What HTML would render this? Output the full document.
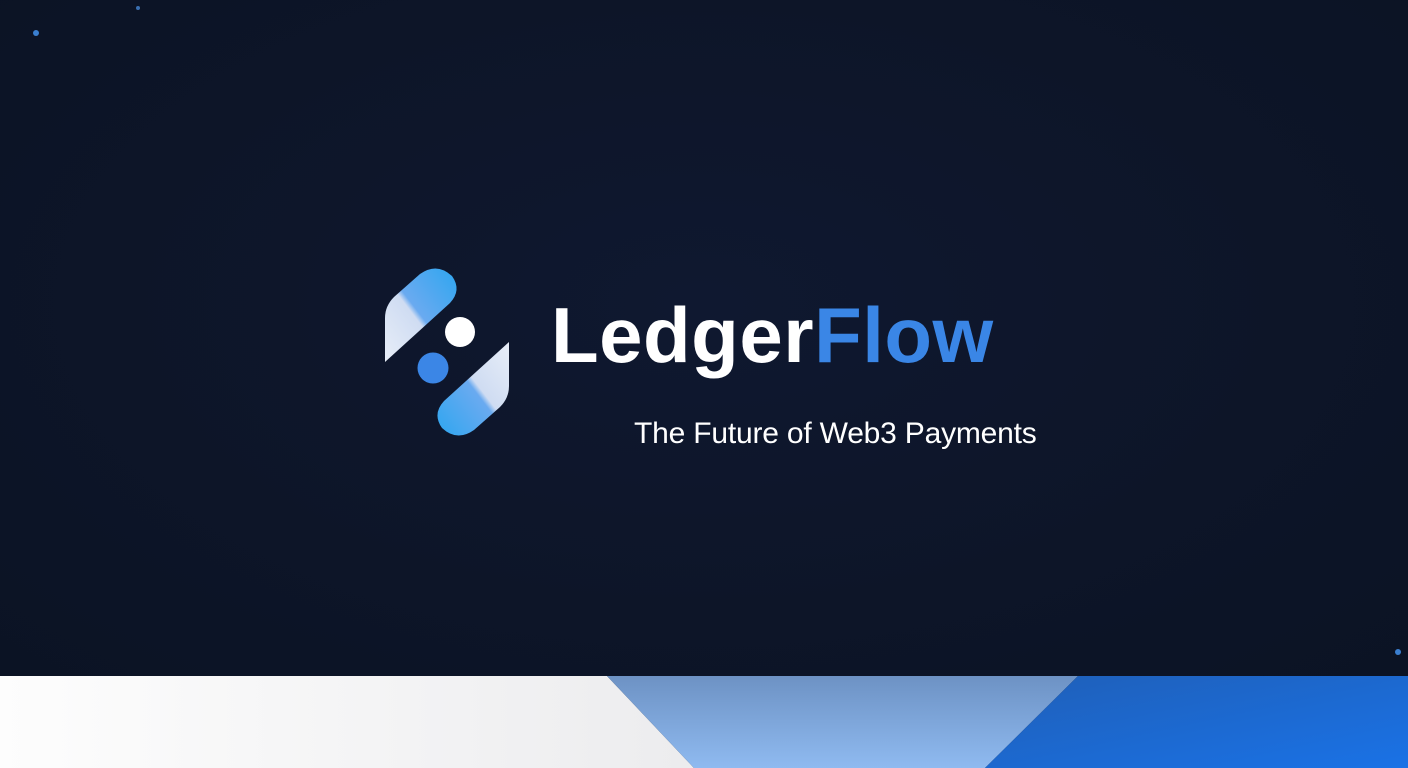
<!DOCTYPE html>
<html><head><style>
html,body{margin:0;padding:0}
body{width:1408px;height:768px;overflow:hidden;position:relative;background:#0e1629;font-family:"Liberation Sans",sans-serif}
.bg{position:absolute;left:0;top:0;width:1408px;height:676px;background:radial-gradient(ellipse at 50% 45%,#0f1830 0%,#0d1528 60%,#0b1324 100%)}
.t1{position:absolute;left:551px;top:296px;font-size:78px;font-weight:bold;color:#fff;letter-spacing:0.5px;line-height:1}
.t1 span{color:#3a86e6}
.t2{position:absolute;left:634px;top:419px;font-size:30px;color:#fff;line-height:1;letter-spacing:-0.2px}
</style></head><body>
<div class="bg"></div>
<svg width="1408" height="768" style="position:absolute;left:0;top:0">
<defs>
<linearGradient id="g1" x1="0" y1="1" x2="1" y2="0"><stop offset="0" stop-color="#e8eef8"/><stop offset="0.45" stop-color="#cfdcf2"/><stop offset="0.5" stop-color="#6aaaf0"/><stop offset="1" stop-color="#2ea6f0"/></linearGradient>
<linearGradient id="g2" x1="0" y1="0" x2="1" y2="0"><stop offset="0" stop-color="#fdfdfd"/><stop offset="1" stop-color="#ececee"/></linearGradient>
<linearGradient id="g3" x1="0" y1="0" x2="0" y2="1"><stop offset="0" stop-color="#6d92c4"/><stop offset="1" stop-color="#8fbaf0"/></linearGradient>
<linearGradient id="g4" x1="0" y1="0" x2="1" y2="1"><stop offset="0" stop-color="#1f5fb8"/><stop offset="1" stop-color="#1a72e6"/></linearGradient>
</defs>
<path d="M0,676 L607,676 L694,768 L0,768Z" fill="url(#g2)"/>
<path d="M607,676 L1078,676 L985,768 L694,768Z" fill="url(#g3)"/>
<path d="M1078,676 L1408,676 L1408,768 L985,768Z" fill="url(#g4)"/>
<path d="M385,362 L385,318 Q385,306 394,297 L420,274 Q437,262 452,276 Q462,290 450,303 Z" fill="url(#g1)"/>
<g transform="rotate(180 447 352)">
<path d="M385,362 L385,318 Q385,306 394,297 L420,274 Q437,262 452,276 Q462,290 450,303 Z" fill="url(#g1)"/>
</g>
<circle cx="460" cy="332" r="15" fill="#fff"/>
<circle cx="433" cy="368" r="15.5" fill="#3b86e6"/>
<circle cx="36" cy="33" r="3" fill="#3a7fd0"/>
<circle cx="138" cy="8" r="2" fill="#3a6fb0"/>
<circle cx="1398" cy="652" r="3" fill="#3a7fd0"/>
</svg>
<div class="t1">Ledger<span>Flow</span></div>
<div class="t2">The Future of Web3 Payments</div>
</body></html>
